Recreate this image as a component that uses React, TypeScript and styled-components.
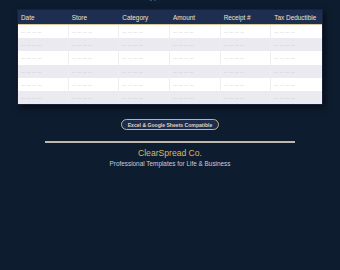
import styled, { createGlobalStyle } from 'styled-components';

const GlobalStyle = createGlobalStyle`
    html, body {
        margin: 0;
        padding: 0;
        background: #0e1c2f;
        font-family: "Liberation Sans", Arial, sans-serif;
    }
`;

const Page = styled.div`
    width: 340px;
    height: 270px;
    overflow: hidden;
    background: #0e1c2f;
    display: flex;
    flex-direction: column;
    align-items: center;
`;

const CutCaption = styled.div`
    margin-top: -6px;
    height: 8px;
    font-size: 6px;
    line-height: 8px;
    color: #9aa4ba;
    text-align: center;
`;

const TableFrame = styled.div`
    margin-top: 7px;
    width: 304px;
    border: 1px solid #17233d;
    background: #1c2c4c;
    box-shadow: 2px 3px 6px rgba(0, 0, 0, 0.55);
`;

const Grid = styled.div`
    display: grid;
    grid-template-columns: repeat(6, 1fr);
`;

const HeaderRow = styled(Grid)`
    height: 14px;
    background: #1e2e50;
    border-bottom: 1px solid #d8c89c;
`;

const HeaderCell = styled.div`
    display: flex;
    align-items: center;
    padding-left: 3px;
    font-size: 6.4px;
    color: #efe3c4;
`;

const BodyRow = styled(Grid)<{ $striped: boolean }>`
    height: 13.2px;
    background: ${({ $striped }) => ($striped ? '#ebeaf0' : '#ffffff')};
`;

const BodyCell = styled.div`
    display: flex;
    align-items: center;
    padding-left: 3px;
    border-right: 1px solid #eeedf1;
    font-size: 4px;
    letter-spacing: 0.2px;
    color: #b9b9c3;

    &:last-child {
        border-right: none;
    }
`;

const Badge = styled.div`
    margin-top: 14px;
    height: 9px;
    padding: 0 6px;
    display: flex;
    align-items: center;
    border: 1.5px solid #c9b682;
    border-radius: 8px;
    background: #1d2c4b;
    font-size: 5.1px;
    font-weight: bold;
    color: #ded6c2;
`;

const Divider = styled.div`
    margin-top: 11px;
    width: 250px;
    height: 1.5px;
    background: #bdb8ad;
`;

const Brand = styled.div`
    margin-top: 5px;
    font-size: 8.6px;
    color: #d8bb66;
`;

const Tagline = styled.div`
    margin-top: 2px;
    font-size: 6.4px;
    color: #c6cde0;
`;

const columns = ['Date', 'Store', 'Category', 'Amount', 'Receipt #', 'Tax Deductible'];
const rows = [0, 1, 2, 3, 4, 5];

function App() {
    return (
        <Page>
            <GlobalStyle />
            <CutCaption>Track every purchase and deduction</CutCaption>
            <TableFrame>
                <HeaderRow>
                    {columns.map((col) => (
                        <HeaderCell key={col}>{col}</HeaderCell>
                    ))}
                </HeaderRow>
                {rows.map((row) => (
                    <BodyRow key={row} $striped={row % 2 === 1}>
                        {columns.map((col) => (
                            <BodyCell key={col}>— — — —</BodyCell>
                        ))}
                    </BodyRow>
                ))}
            </TableFrame>
            <Badge>Excel &amp; Google Sheets Compatible</Badge>
            <Divider />
            <Brand>ClearSpread Co.</Brand>
            <Tagline>Professional Templates for Life &amp; Business</Tagline>
        </Page>
    );
}

export default App;
